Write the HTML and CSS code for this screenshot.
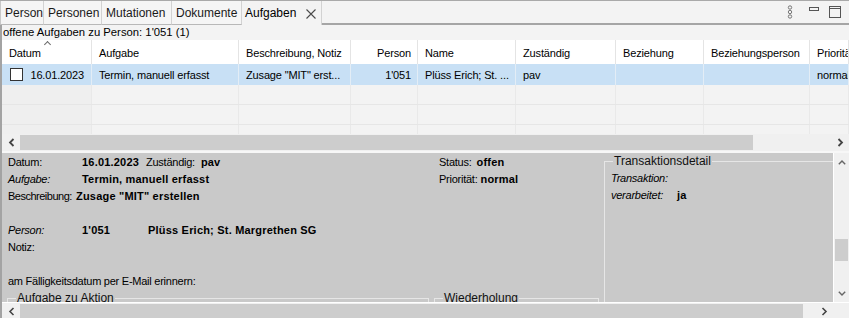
FILE: index.html
```html
<!DOCTYPE html>
<html lang="de">
<head>
<meta charset="utf-8">
<title>Aufgaben</title>
<link rel="stylesheet" href="styles.css">
</head>
<body>
<div class="app">
  <div class="tabbar">
    <div class="tab t1">Person</div>
    <div class="tab t2">Personen</div>
    <div class="tab t3">Mutationen</div>
    <div class="tab t4">Dokumente</div>
    <div class="tab t5 active">Aufgaben
      <svg class="close" width="10" height="10" viewBox="0 0 10 10"><path d="M0.5 0.5 L9.5 9.5 M9.5 0.5 L0.5 9.5" stroke="#4a4a4a" stroke-width="1.1" fill="none"/></svg>
    </div>
    <div class="tabfill">
      <svg class="ic-menu" width="6" height="14" viewBox="0 0 6 14"><circle cx="3" cy="2.5" r="1.7" stroke="#777" fill="none" stroke-width="1"/><circle cx="3" cy="7" r="1.7" stroke="#777" fill="none" stroke-width="1"/><circle cx="3" cy="11.5" r="1.7" stroke="#777" fill="none" stroke-width="1"/></svg>
      <svg class="ic-min" width="10" height="4" viewBox="0 0 10 4"><rect x="0.5" y="0.5" width="9" height="3" stroke="#555" fill="none" stroke-width="1"/></svg>
      <svg class="ic-max" width="12" height="12" viewBox="0 0 12 12"><rect x="0.5" y="0.5" width="11" height="11" stroke="#555" fill="none" stroke-width="1"/><line x1="0" y1="2.5" x2="12" y2="2.5" stroke="#555" stroke-width="1"/></svg>
    </div>
  </div>

  <div class="main">
    <div class="caption">offene Aufgaben zu Person: 1'051 (1)</div>

    <div class="grid">
      <div class="row head">
        <div class="c sortcol">Datum<span class="sort"></span></div>
        <div class="c">Aufgabe</div>
        <div class="c">Beschreibung, Notiz</div>
        <div class="c num">Person</div>
        <div class="c">Name</div>
        <div class="c">Zuständig</div>
        <div class="c">Beziehung</div>
        <div class="c">Beziehungsperson</div>
        <div class="c">Priorität</div>
      </div>
      <div class="row sel">
        <div class="c datecell"><span class="chk"></span><span>16.01.2023</span></div>
        <div class="c">Termin, manuell erfasst</div>
        <div class="c">Zusage "MIT" erst...</div>
        <div class="c num">1'051</div>
        <div class="c">Plüss Erich; St. ...</div>
        <div class="c">pav</div>
        <div class="c"></div>
        <div class="c"></div>
        <div class="c">normal</div>
      </div>
      <div class="row empty">
        <div class="c first"></div><div class="c"></div><div class="c"></div><div class="c"></div><div class="c"></div><div class="c"></div><div class="c"></div><div class="c"></div><div class="c"></div>
      </div>
      <div class="row empty">
        <div class="c first"></div><div class="c"></div><div class="c"></div><div class="c"></div><div class="c"></div><div class="c"></div><div class="c"></div><div class="c"></div><div class="c"></div>
      </div>
      <div class="row empty">
        <div class="c first"></div><div class="c"></div><div class="c"></div><div class="c"></div><div class="c"></div><div class="c"></div><div class="c"></div><div class="c"></div><div class="c"></div>
      </div>
    </div>

    <div class="hscroll">
      <div class="arrow first"><svg width="7" height="9" viewBox="0 0 7 9"><path d="M5.5 1 L2 4.5 L5.5 8" stroke="#444" stroke-width="1.8" fill="none"/></svg></div>
      <div class="track"><div class="thumb thumb-top"></div></div>
      <div class="arrow"><svg width="7" height="9" viewBox="0 0 7 9"><path d="M1.5 1 L5 4.5 L1.5 8" stroke="#444" stroke-width="1.8" fill="none"/></svg></div>
    </div>
    <div class="gap"></div>

    <div class="detailwrap">
      <div class="detail">
        <div class="dleft">
          <div class="dtop">
            <div class="dmain">
              <div class="drow"><span class="lbl w74">Datum:</span><b class="w64">16.01.2023</b><span class="lbl">Zuständig:</span><b class="ml6">pav</b></div>
              <div class="drow"><i class="lbl w74">Aufgabe:</i><b>Termin, manuell erfasst</b></div>
              <div class="drow tall"><span class="lbl narrow w68">Beschreibung:</span><b>Zusage "MIT" erstellen</b></div>
            </div>
            <div class="dstatus">
              <div class="drow"><span class="lbl">Status:</span><b class="ml5">offen</b></div>
              <div class="drow"><span class="lbl">Priorität:</span><b class="ml3">normal</b></div>
            </div>
          </div>
          <div class="drow mt16"><i class="lbl w74">Person:</i><b class="w66">1'051</b><b>Plüss Erich; St. Margrethen SG</b></div>
          <div class="drow"><span class="lbl">Notiz:</span></div>
          <div class="drow mt17"><span class="lbl">am Fälligkeitsdatum per E-Mail erinnern:</span></div>
          <div class="groups">
            <fieldset class="grp g1"><legend>Aufgabe zu Aktion</legend></fieldset>
            <fieldset class="grp g2"><legend>Wiederholung</legend></fieldset>
          </div>
        </div>
        <fieldset class="grp trans">
          <legend>Transaktionsdetail</legend>
          <div class="drow"><i class="lbl">Transaktion:</i></div>
          <div class="drow"><i class="lbl w66">verarbeitet:</i><b>ja</b></div>
        </fieldset>
      </div>
      <div class="vscroll">
        <div class="varrow top"><svg width="8" height="5" viewBox="0 0 8 5"><path d="M0.8 4.2 L4 1 L7.2 4.2" stroke="#666" stroke-width="1.4" fill="none"/></svg></div>
        <div class="vtrack"><div class="vthumb"></div></div>
        <div class="varrow bottom"><svg width="8" height="5" viewBox="0 0 8 5"><path d="M0.8 0.8 L4 4 L7.2 0.8" stroke="#666" stroke-width="1.4" fill="none"/></svg></div>
      </div>
    </div>

    <div class="hscroll bottombar">
      <div class="arrow first"><svg width="7" height="9" viewBox="0 0 7 9"><path d="M5.5 1 L2 4.5 L5.5 8" stroke="#444" stroke-width="1.6" fill="none"/></svg></div>
      <div class="track"><div class="thumb thumb-bottom"></div></div>
      <div class="arrow"><svg width="7" height="9" viewBox="0 0 7 9"><path d="M1.5 1 L5 4.5 L1.5 8" stroke="#444" stroke-width="1.6" fill="none"/></svg></div>
      <div class="corner"></div>
    </div>
  </div>
</div>
</body>
</html>
```

FILE: styles.css
```css
* { box-sizing: border-box; }
html, body { margin: 0; padding: 0; }
body {
  width: 849px;
  height: 318px;
  overflow: hidden;
  background: #f3f3f3;
  font-family: "Liberation Sans", Arial, sans-serif;
  color: #000;
}
svg { display: block; flex-shrink: 0; }
.app { display: flex; flex-direction: column; height: 318px; }

/* tabs */
.tabbar {
  display: flex;
  height: 25px;
  flex-shrink: 0;
  border-top: 1px solid #a9a9a9;
  background: #f3f3f3;
}
.tab {
  display: flex;
  align-items: center;
  height: 24px;
  padding-left: 4px;
  font-size: 12px;
  color: #1a1a1a;
  border-right: 1px solid #d2d2d2;
  border-bottom: 1px solid #b8b8b8;
  background: #f5f5f5;
  white-space: nowrap;
}
.t1 { width: 44px; border-left: 1px solid #c8c8c8; }
.t2 { width: 58px; }
.t3 { width: 70px; }
.t4 { width: 70px; }
.t5 { width: 80px; padding-left: 3px; }
.tab.active { background: #f3f3f3; border-bottom: none; color: #000; }
.close { margin-left: 10px; margin-top: 1px; }
.tabfill {
  flex: 1;
  height: 24px;
  border-bottom: 2px solid #a5a5a5;
  display: flex;
  align-items: flex-start;
  justify-content: flex-end;
}
.ic-menu { margin-top: 4px; margin-right: 16px; }
.ic-min { margin-top: 6px; margin-right: 10px; }
.ic-max { margin-top: 5px; margin-right: 8px; }

/* main area */
.main {
  flex: 1;
  display: flex;
  flex-direction: column;
  border-left: 2px solid #a3a3a3;
  min-height: 0;
}
.caption {
  height: 15px;
  flex-shrink: 0;
  line-height: 14px;
  font-size: 11.3px;
  padding-left: 1px;
  white-space: nowrap;
}

/* table */
.grid { height: 94px; flex-shrink: 0; overflow: hidden; }
.row {
  display: grid;
  grid-template-columns: 90px 147px 112px 67px 98px 100px 88px 106px 1fr;
  height: 20px;
  font-size: 11px;
  letter-spacing: -0.15px;
}
.c {
  display: flex;
  align-items: center;
  padding: 0 6px 0 7px;
  border-right: 1px solid #e4e4e4;
  white-space: nowrap;
  overflow: hidden;
}
.c.num { justify-content: flex-end; }
.head { height: 24px; background: #fff; }
.head .c { padding-top: 1px; }
.sortcol { position: relative; }
.sort {
  position: absolute;
  left: 43px;
  top: 2px;
  width: 5px;
  height: 5px;
  border-left: 1px solid #6a6a6a;
  border-top: 1px solid #6a6a6a;
  transform: rotate(45deg);
}
.sel { background: #c8e0f5; height: 21px; }
.sel .c { border-right-color: #e3edf6; }
.datecell { justify-content: space-between; padding: 0 7px 0 8px; }
.chk {
  width: 13px;
  height: 13px;
  border: 1px solid #333;
  background: #fff;
}
.empty { border-bottom: 1px solid #e6e6e6; }
.empty .c { border-right-color: #e9e9e9; }
.empty .first { background: #efefef; }

/* scrollbars */
.hscroll {
  display: flex;
  height: 17px;
  background: #f0f0f0;
  flex-shrink: 0;
}
.arrow {
  width: 17px;
  flex-shrink: 0;
  display: flex;
  align-items: center;
  justify-content: center;
}
.arrow.first { width: 18px; }
.track { flex: 1; display: flex; align-items: center; min-width: 0; }
.thumb { height: 15px; background: #cdcdcd; flex-shrink: 0; }
.thumb-top { width: 733px; }
.thumb-bottom { width: 783px; }
.gap { height: 2px; background: #f7f7f7; flex-shrink: 0; }

.bottombar { border-top: 1px solid #fff; height: 17px; }
.bottombar .thumb { height: 14px; }
.corner { width: 16px; flex-shrink: 0; }

/* detail panel */
.detailwrap {
  height: 149px;
  display: flex;
  flex-shrink: 0;
}
.detail {
  flex: 1;
  display: flex;
  background: #c9c9c9;
  overflow: hidden;
  font-size: 11px;
}
.dleft {
  width: 602px;
  flex-shrink: 0;
  padding-left: 6px;
  display: flex;
  flex-direction: column;
}
.dtop { display: flex; flex-shrink: 0; }
.dmain { width: 431px; }
.dstatus { flex: 1; }
.drow {
  display: flex;
  align-items: center;
  height: 17px;
  flex-shrink: 0;
  white-space: nowrap;
}
.drow.tall { height: 18px; }
.lbl { letter-spacing: -0.25px; font-style: normal; }
.lbl.narrow { letter-spacing: -0.5px; }
i.lbl { font-style: italic; }
b { font-weight: bold; letter-spacing: 0.2px; }
.w74 { width: 74px; flex-shrink: 0; }
.w64 { width: 64px; flex-shrink: 0; }
.w66 { width: 66px; flex-shrink: 0; }
.w68 { width: 68px; flex-shrink: 0; }
.ml6 { margin-left: 6px; }
.ml5 { margin-left: 5px; }
.ml3 { margin-left: 3px; }
.mt16 { margin-top: 16px; }
.mt17 { margin-top: 17px; }

.grp {
  margin: 0;
  padding: 0 6px;
  border: 1px solid #e6e6e6;
  min-width: 0;
}
.grp legend {
  font-size: 12px;
  line-height: 16px;
  padding: 0 1px;
  margin-left: 2px;
  color: #111;
}
.groups { display: flex; flex-shrink: 0; margin-top: 1px; margin-left: -1px; }
.g1 { width: 422px; height: 40px; flex-shrink: 0; }
.g2 { width: 165px; height: 40px; margin-left: 5px; flex-shrink: 0; }
.trans {
  width: 260px;
  height: 200px;
  flex-shrink: 0;
}

.vscroll {
  width: 16px;
  border-left: 1px solid #fff;
  background: #f0f0f0;
  display: flex;
  flex-direction: column;
  flex-shrink: 0;
}
.varrow {
  height: 17px;
  flex-shrink: 0;
  display: flex;
  align-items: center;
  justify-content: center;
}
.varrow.top { height: 19px; }
.vtrack { flex: 1; display: flex; flex-direction: column; justify-content: flex-end; padding-bottom: 24px; }
.vthumb { height: 22px; background: #cdcdcd; margin: 0 1px; }
```
